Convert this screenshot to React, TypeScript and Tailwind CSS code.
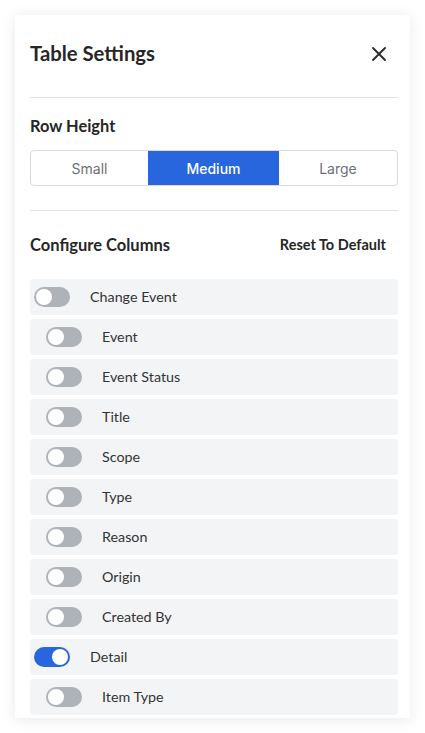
import React from "react";

const rows: { label: string; child: boolean; on: boolean }[] = [
  { label: "Change Event", child: false, on: false },
  { label: "Event", child: true, on: false },
  { label: "Event Status", child: true, on: false },
  { label: "Title", child: true, on: false },
  { label: "Scope", child: true, on: false },
  { label: "Type", child: true, on: false },
  { label: "Reason", child: true, on: false },
  { label: "Origin", child: true, on: false },
  { label: "Created By", child: true, on: false },
  { label: "Detail", child: false, on: true },
  { label: "Item Type", child: true, on: false },
];

function Toggle({ on }: { on: boolean }) {
  return on ? (
    <div className="flex h-[20px] w-[36px] shrink-0 items-center justify-end rounded-full bg-[#2766dd] px-[2px]">
      <div className="h-[16px] w-[16px] rounded-full bg-white" />
    </div>
  ) : (
    <div className="flex h-[20px] w-[36px] shrink-0 items-center justify-start rounded-full bg-[#adb3b8] px-[2px]">
      <div className="h-[16px] w-[16px] rounded-full bg-white" />
    </div>
  );
}

export default function App() {
  return (
    <div className="min-h-[733px] w-[425px] bg-white pt-[15px]" style={{ fontFamily: "Lato, 'Noto Sans', sans-serif" }}>
      <div className="ml-[15px] flex w-[395px] flex-col bg-white pl-[15px] pr-[12px] pt-[24px] pb-[3px] shadow-[0_2px_14px_rgba(0,0,0,0.09)]">
        <div className="flex h-[28px] items-center justify-between">
          <div className="text-[20.3px] font-bold leading-[28px] text-[#262626]">Table Settings</div>
          <svg className="mr-[11px] mt-[2px]" width="16" height="16" viewBox="0 0 16 16" fill="none">
            <path d="M2 2L14 14M14 2L2 14" stroke="#2a2a2a" strokeWidth="1.9" strokeLinecap="round" />
          </svg>
        </div>
        <div className="mt-[30px] h-px bg-[#e3e3e3]" />
        <div className="mt-[18px] text-[16.4px] font-bold leading-[20px] text-[#262626]">Row Height</div>
        <div className="mt-[14px] flex h-[36px] overflow-hidden rounded-[4px] border border-[#d9d9d9] text-[14px]" style={{ fontFamily: "Inter, 'Liberation Sans', sans-serif" }}>
          <div className="flex w-[117px] items-center justify-center text-[#6b7078]">Small</div>
          <div className="flex w-[131px] items-center justify-center bg-[#2766dd] font-medium text-white">Medium</div>
          <div className="flex flex-1 items-center justify-center text-[#6b7078]">Large</div>
        </div>
        <div className="mt-[24px] h-px bg-[#e3e3e3]" />
        <div className="mt-[24px] flex h-[20px] items-center justify-between">
          <div className="text-[16.5px] font-bold leading-[20px] text-[#262626]">Configure Columns</div>
          <div className="mr-[12px] text-[14.5px] font-bold leading-[20px] text-[#262626]">Reset To Default</div>
        </div>
        <div className="mt-[24px] flex flex-col gap-[4px]">
          {rows.map((r) => (
            <div
              key={r.label}
              className={
                r.child
                  ? "flex h-[36px] items-center gap-[20px] rounded-[4px] bg-[#f3f4f6] pl-[16px]"
                  : "flex h-[36px] items-center gap-[20px] rounded-[4px] bg-[#f3f4f6] pl-[4px]"
              }
            >
              <Toggle on={r.on} />
              <span className="text-[14.3px] text-[#333333]">{r.label}</span>
            </div>
          ))}
        </div>
      </div>
    </div>
  );
}
